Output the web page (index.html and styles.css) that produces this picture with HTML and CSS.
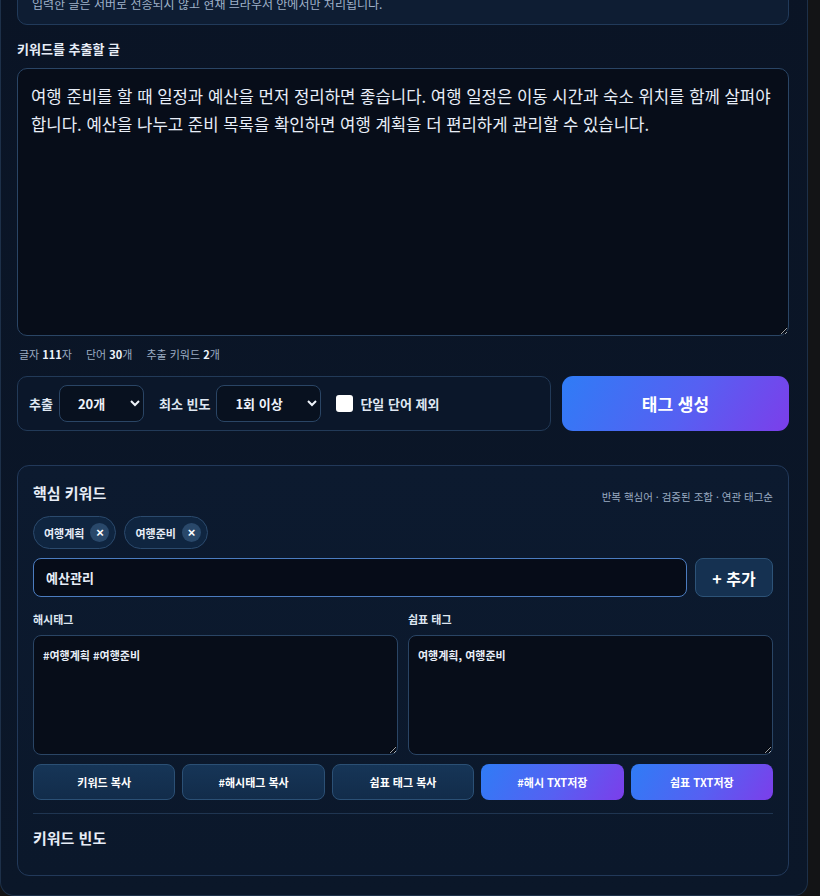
FILE: index.html
```html
<!DOCTYPE html>
<html lang="ko">
<head>
    <meta charset="UTF-8">
    <meta name="viewport" content="width=device-width, initial-scale=1.0">
    <title>키워드 태그 생성기</title>
    <link rel="stylesheet" href="styles.css">
</head>
<body>
    <div class="panel">
        <!-- 안내 -->
        <div class="notice">입력한 글은 서버로 전송되지 않고 현재 브라우저 안에서만 처리됩니다.</div>

        <label class="field-label" for="source">키워드를 추출할 글</label>
        <textarea id="source" class="source">여행 준비를 할 때 일정과 예산을 먼저 정리하면 좋습니다. 여행 일정은 이동 시간과 숙소 위치를 함께 살펴야 합니다. 예산을 나누고 준비 목록을 확인하면 여행 계획을 더 편리하게 관리할 수 있습니다.</textarea>

        <div class="stats">
            <span>글자 <b>111</b>자</span>
            <span>단어 <b>30</b>개</span>
            <span>추출 키워드 <b>2</b>개</span>
        </div>

        <div class="controls">
            <div class="options">
                <span class="opt-label">추출</span>
                <select class="select select-count">
                    <option>20개</option>
                    <option>10개</option>
                    <option>30개</option>
                </select>
                <span class="opt-label">최소 빈도</span>
                <select class="select select-freq">
                    <option>1회 이상</option>
                    <option>2회 이상</option>
                </select>
                <label class="check">
                    <input type="checkbox">
                    <span>단일 단어 제외</span>
                </label>
            </div>
            <button class="btn-main">태그 생성</button>
        </div>

        <!-- 결과 -->
        <div class="result">
            <div class="result-head">
                <h2>핵심 키워드</h2>
                <span class="hint">반복 핵심어 · 검증된 조합 · 연관 태그순</span>
            </div>

            <div class="chips">
                <span class="chip">여행계획 <button class="chip-x">×</button></span>
                <span class="chip">여행준비 <button class="chip-x">×</button></span>
            </div>

            <div class="add-row">
                <input type="text" class="add-input" value="예산관리">
                <button class="btn-add">+ 추가</button>
            </div>

            <div class="outputs">
                <div class="output">
                    <div class="out-label">해시태그</div>
                    <textarea class="out-text">#여행계획 #여행준비</textarea>
                </div>
                <div class="output">
                    <div class="out-label">쉼표 태그</div>
                    <textarea class="out-text">여행계획, 여행준비</textarea>
                </div>
            </div>

            <div class="actions">
                <button class="btn-sub">키워드 복사</button>
                <button class="btn-sub">#해시태그 복사</button>
                <button class="btn-sub">쉼표 태그 복사</button>
                <button class="btn-grad">#해시 TXT저장</button>
                <button class="btn-grad">쉼표 TXT저장</button>
            </div>

            <div class="freq">
                <h2>키워드 빈도</h2>
            </div>
        </div>
    </div>
</body>
</html>
```

FILE: styles.css
```css
* {
    margin: 0;
    padding: 0;
    box-sizing: border-box;
}

body {
    font-family: "Noto Sans CJK KR", "Noto Sans", sans-serif;
    background-color: #131416;
    color: #e7edf7;
    width: 820px;
    overflow: hidden;
}

/* Main panel */
.panel {
    width: 808px;
    margin-top: -33px;
    padding: 16px 18px 19px 16px;
    background: linear-gradient(180deg, #0a1425 0%, #0b1729 100%);
    border: 1px solid #1d3049;
    border-top: none;
    border-radius: 0 0 14px 14px;
}

.notice {
    padding: 11px 14px;
    font-size: 12px;
    line-height: 18px;
    color: #9fb1c9;
    background-color: #0e1d33;
    border: 1px solid #213a5a;
    border-radius: 10px;
}

.field-label {
    display: block;
    margin: 15px 0 10px;
    font-size: 13px;
    font-weight: 700;
    line-height: 18px;
    color: #e7edf7;
}

.source {
    display: block;
    width: 100%;
    height: 268px;
    padding: 13px 13px;
    font-family: inherit;
    font-size: 16.7px;
    line-height: 28px;
    word-break: keep-all;
    color: #e8eef8;
    background-color: #070d19;
    border: 1px solid #2a4565;
    border-radius: 10px;
    resize: vertical;
    outline: none;
    color-scheme: dark;
}

.stats {
    display: flex;
    gap: 14px;
    margin-top: 9px;
    padding-left: 2px;
    font-size: 11px;
    line-height: 18px;
    color: #9aabc2;
}

.stats b {
    color: #eef3fa;
}

/* Controls row */
.controls {
    display: grid;
    grid-template-columns: 1fr 227px;
    gap: 11px;
    margin-top: 13px;
}

.options {
    display: flex;
    align-items: center;
    height: 55px;
    padding: 0 11px;
    background-color: #0b172a;
    border: 1px solid #223a58;
    border-radius: 10px;
}

.opt-label {
    font-size: 13px;
    font-weight: 700;
    color: #dfe7f2;
    margin-right: 6px;
}

.select {
    height: 37px;
    padding: 0 8px 0 14px;
    font-family: inherit;
    font-size: 13px;
    font-weight: 700;
    color: #eef3fa;
    background-color: #08111f;
    border: 1px solid #2a4565;
    border-radius: 8px;
    margin-right: 15px;
    color-scheme: dark;
    outline: none;
}

.select-count {
    width: 85px;
}

.select-freq {
    width: 105px;
}

.check {
    display: flex;
    align-items: center;
    gap: 7px;
    font-size: 13px;
    font-weight: 700;
    color: #dfe7f2;
}

.check input {
    appearance: none;
    width: 17px;
    height: 17px;
    background-color: #fff;
    border-radius: 3px;
}

.btn-main {
    height: 55px;
    font-family: inherit;
    font-size: 17px;
    font-weight: 700;
    color: #fff;
    background: linear-gradient(120deg, #2f7cf6 0%, #5660f2 55%, #7c3eea 100%);
    border: none;
    border-radius: 11px;
    cursor: pointer;
}

/* Result card */
.result {
    margin-top: 34px;
    padding: 16px 15px 26px;
    background: linear-gradient(180deg, #0c1a2f 0%, #0b182b 100%);
    border: 1px solid #22395a;
    border-radius: 12px;
}

.result-head {
    display: flex;
    justify-content: space-between;
    align-items: center;
}

.result h2 {
    font-size: 15px;
    font-weight: 700;
    line-height: 22px;
    color: #e7edf7;
}

.hint {
    margin-top: 6px;
    font-size: 10.5px;
    color: #9aabc2;
}

.chips {
    display: flex;
    gap: 8px;
    margin-top: 12px;
}

.chip {
    display: inline-flex;
    align-items: center;
    gap: 6px;
    height: 33px;
    padding: 0 6px 0 10px;
    font-size: 11px;
    font-weight: 700;
    color: #e7edf7;
    background-color: #0f2540;
    border: 1px solid #2b4a6d;
    border-radius: 999px;
}

.chip-x {
    width: 19px;
    height: 19px;
    font-size: 13px;
    font-weight: 700;
    line-height: 19px;
    color: #fff;
    background-color: #29486a;
    border: none;
    border-radius: 50%;
}

.add-row {
    display: flex;
    gap: 8px;
    margin-top: 9px;
}

.add-input {
    flex: 1;
    height: 39px;
    padding: 0 12px;
    font-family: inherit;
    font-size: 13px;
    font-weight: 700;
    color: #e7edf7;
    background-color: #060c18;
    border: 1px solid #4b7cc0;
    border-radius: 8px;
    outline: none;
}

.btn-add {
    width: 78px;
    height: 39px;
    font-family: inherit;
    font-size: 16px;
    font-weight: 700;
    color: #fff;
    background-color: #153151;
    border: 1px solid #2d5378;
    border-radius: 8px;
}

.outputs {
    display: grid;
    grid-template-columns: 1fr 1fr;
    gap: 10px;
    margin-top: 14px;
}

.out-label {
    font-size: 11px;
    font-weight: 700;
    line-height: 16px;
    color: #dfe7f2;
    margin-bottom: 8px;
}

.out-text {
    display: block;
    width: 100%;
    height: 120px;
    padding: 10px 9px;
    font-family: inherit;
    font-size: 11px;
    font-weight: 700;
    line-height: 18px;
    color: #e7edf7;
    background-color: #070d19;
    border: 1px solid #2a4565;
    border-radius: 8px;
    resize: vertical;
    outline: none;
    color-scheme: dark;
}

.actions {
    display: grid;
    grid-template-columns: repeat(5, 1fr);
    gap: 7px;
    margin-top: 9px;
    padding-bottom: 13px;
    border-bottom: 1px solid #1f3551;
}

.btn-sub,
.btn-grad {
    height: 36px;
    font-family: inherit;
    font-size: 11px;
    font-weight: 700;
    color: #fff;
    border-radius: 8px;
    cursor: pointer;
}

.btn-sub {
    background: linear-gradient(180deg, #163557 0%, #122c4a 100%);
    border: 1px solid #2b5075;
}

.btn-grad {
    background: linear-gradient(120deg, #2f7cf6 0%, #5660f2 55%, #7c3eea 100%);
    border: none;
}

.freq {
    margin-top: 13px;
}
```
